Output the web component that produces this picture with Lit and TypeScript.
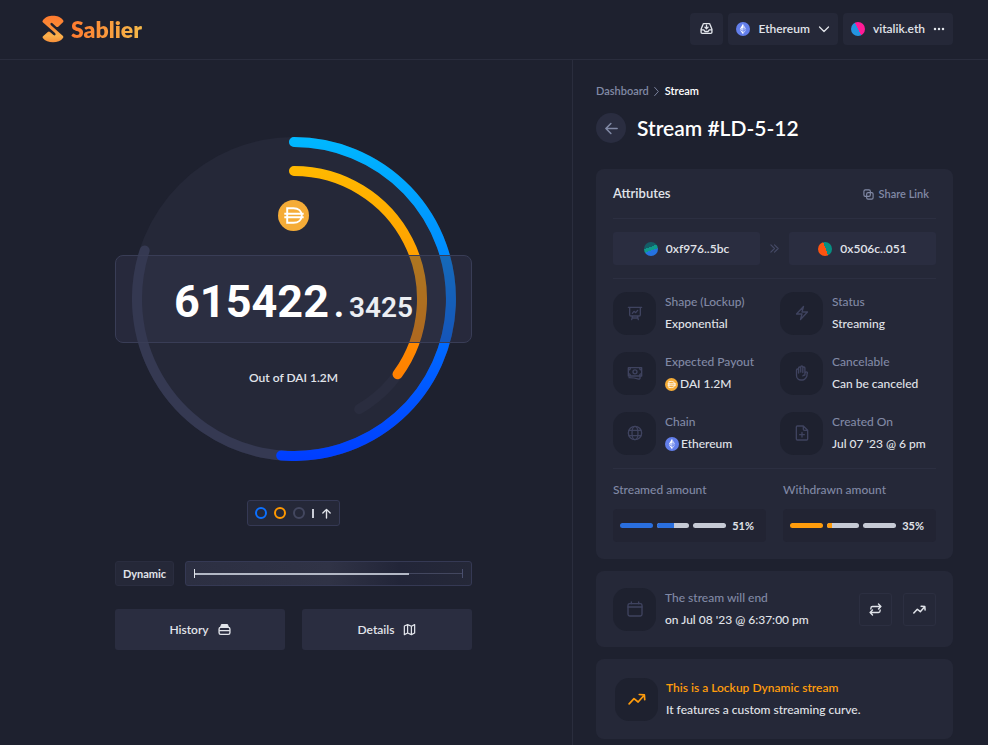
import { LitElement, html, css, svg, TemplateResult, SVGTemplateResult } from "lit";
import { customElement, state } from "lit/decorators.js";

const icon = (body: SVGTemplateResult, size = 16, width = 1.75, box = 24) => html`
  <svg class="icon" width=${size} height=${size} viewBox="0 0 ${box} ${box}" fill="none" stroke="currentColor"
    stroke-width=${width} stroke-linecap="round" stroke-linejoin="round" aria-hidden="true">${body}</svg>`;

const shapes = {
  presentation: svg`<path d="M2 3.500h20M4 3.500v11c0 1.200 1 2 2 2h12c1.200 0 2-.8 2-2v-11M8.500 16.500l-1.500 5.500M15.500 16.500l1.500 5.500M7.500 19.500h9M8 12.500l2.500-3 2.500 2 3-3.500"/>`,
  banknotes: svg`<path d="M2 4h20v12.500H2zM2 7.500a3 3 0 0 0 3-3M22 7.500a3 3 0 0 1-3-3M2 13a3 3 0 0 1 3 3M22 13a3 3 0 0 0-3 3M3 19c5.500 0 10 .7 14.500 2.200 1 .3 2-.3 2-1.300v-3"/><circle cx="12" cy="10.250" r="3"/>`,
  globe: svg`<circle cx="12" cy="12" r="10"/><ellipse cx="12" cy="12" rx="4.500" ry="10"/><path d="M3 8h18M3 16h18"/>`,
  bolt: svg`<path d="M3.750 13.500l10.500-11.250L12 10.500h8.250L9.750 21.750 12 13.500H3.750z"/>`,
  hand: svg`<path d="M10.050 4.575a1.575 1.575 0 1 0-3.150 0v3m3.150-3v-1.500a1.575 1.575 0 0 1 3.150 0v1.500m-3.150 0l.075 5.925m3.075.750V4.575m0 0a1.575 1.575 0 0 1 3.150 0V15M6.900 7.575a1.575 1.575 0 1 0-3.150 0v8.175a6.750 6.750 0 0 0 6.750 6.750h2.018a5.250 5.250 0 0 0 3.712-1.538l1.732-1.732a5.250 5.250 0 0 0 1.538-3.712l.003-2.024a.668.668 0 0 1 .198-.471 1.575 1.575 0 1 0-2.228-2.228 3.818 3.818 0 0 0-1.120 2.687M6.900 7.575V12m6.270 4.318A4.490 4.490 0 0 1 16.350 15"/>`,
  document: svg`<path d="M14 1.500H5A1.500 1.500 0 0 0 3.500 3v18A1.500 1.500 0 0 0 5 22.500h14a1.500 1.500 0 0 0 1.500-1.500V8zM14 1.500v5A1.500 1.500 0 0 0 15.500 8h5M12 11v7M8.500 14.500h7"/>`,
  calendar: svg`<rect x="1.500" y="4" width="21" height="18.500" rx="2.500"/><path d="M1.500 9h21M6.500 1.500V4M17.500 1.500V4"/>`,
  trend: svg`<path d="M1.500 18.500l6.500-7 5.500 4.500 8-9M15 6l6.800.5.500 6.500"/>`,
  swap: svg`<path d="M3.500 11V9.500a3 3 0 0 1 3-3H22M17.500 2L22 6.500 17.500 11"/><path d="M20.500 13V14.500a3 3 0 0 1-3 3H2M6.500 13L2 17.500 6.500 22"/>`,
  inbox: svg`<path d="M2 13.500l3.500-9A2 2 0 0 1 7.500 3h9a2 2 0 0 1 2 1.500l3.500 9V19a2 2 0 0 1-2 2H4a2 2 0 0 1-2-2zM2 14.500h5l2 3h6l2-3h5M12 6v6M9 9.500l3 3 3-3"/>`,
  chevronDown: svg`<path d="M3 8l9 9 9-9"/>`,
  chevronRight: svg`<path d="M8 3l8 9-8 9"/>`,
  chevrons: svg`<path d="M4 4l8 8-8 8M12 4l8 8-8 8"/>`,
  arrowLeft: svg`<path d="M21 12H3M11 4l-8 8 8 8"/>`,
  arrowUp: svg`<path d="M12 22V3M4 11l8-8 8 8"/>`,
  copy: svg`<rect x="2" y="2" width="14" height="14" rx="3"/><rect x="8" y="8" width="14" height="14" rx="3"/>`,
  dots: svg`<g fill="currentColor" stroke="none"><circle cx="4" cy="12" r="2.500"/><circle cx="12" cy="12" r="2.500"/><circle cx="20" cy="12" r="2.500"/></g>`,
  archive: svg`<path d="M5 8l1-3.500A2 2 0 0 1 8 3h8a2 2 0 0 1 2 1.500L19 8z" fill="currentColor"/><rect x="2" y="8" width="20" height="13" rx="3"/><path d="M3 14h18"/>`,
  map: svg`<path d="M2.500 5.500L8.500 3l7 3 6-3v15.500l-6 3-7-3-6 3zM8.500 3v15.500M15.500 6v15.500"/>`,
};

const ethereum = html`
  <svg class="icon" width="14" height="14" viewBox="0 0 32 32" aria-hidden="true">
    <circle cx="16" cy="16" r="16" fill="#627eea"/>
    <path d="M16 4v8.900l7.500 3.400z" fill="#fff" fill-opacity=".6"/><path d="M16 4L8.500 16.300l7.500-3.400z" fill="#fff"/>
    <path d="M16 22v6l7.500-10.400z" fill="#fff" fill-opacity=".6"/><path d="M16 28v-6l-7.500-4.400z" fill="#fff"/>
    <path d="M16 20.600l7.500-4.300-7.500-3.400z" fill="#fff" fill-opacity=".3"/><path d="M8.500 16.300l7.500 4.300v-7.700z" fill="#fff" fill-opacity=".6"/>
  </svg>`;

const dai = (size: number) => html`
  <svg class="icon" width=${size} height=${size} viewBox="0 0 32 32" fill="none" stroke="#fff" stroke-width="2" aria-hidden="true">
    <circle cx="16" cy="16" r="16" fill="#f5ac37" stroke="none"/>
    <path d="M9.500 8.500h6.500c5 0 8.500 3 8.500 7.500s-3.500 7.500-8.500 7.500H9.500zM6.500 14.200h20M6.500 17.800h20"/>
  </svg>`;

/* Arc on the gauge, clockwise from twelve o'clock; share is 0 to 1. */
const arc = (radius: number, share: number) => {
  const a = share * 2 * Math.PI;
  const x = (162 + radius * Math.sin(a)).toFixed(2);
  const y = (162 - radius * Math.cos(a)).toFixed(2);
  return `M162 ${162 - radius}A${radius} ${radius} 0 ${share > 0.5 ? 1 : 0} 1 ${x} ${y}`;
};

interface Fact { icon: SVGTemplateResult; label: string; value: string; mark?: TemplateResult }

@customElement("app-root")
export class AppRoot extends LitElement {
  @state() private streamed = 51;
  @state() private withdrawn = 35;

  private facts: Fact[] = [
    { icon: shapes.presentation, label: "Shape (Lockup)", value: "Exponential" },
    { icon: shapes.bolt, label: "Status", value: "Streaming" },
    { icon: shapes.banknotes, label: "Expected Payout", value: "DAI 1.2M", mark: dai(13) },
    { icon: shapes.hand, label: "Cancelable", value: "Can be canceled" },
    { icon: shapes.globe, label: "Chain", value: "Ethereum", mark: ethereum },
    { icon: shapes.document, label: "Created On", value: "Jul 07 '23 @ 6 pm" },
  ];

  static styles = css`
    :host {
      display: flex; flex-direction: column; min-height: 100vh; box-sizing: border-box;
      background: #1e212f; color: #e1e4ea;
      font: 500 12px/16px Lato, "Liberation Sans", sans-serif;
    }
    *, *::before, *::after { box-sizing: border-box; }
    button { font: inherit; color: inherit; border: 0; padding: 0; margin: 0; cursor: pointer; background: none; }
    a { color: inherit; text-decoration: none; }
    h1, h2, p, dl, dd, dt, ol { margin: 0; padding: 0; }
    .icon { display: block; flex: none; }

    .top { display: flex; align-items: center; justify-content: space-between; height: 60px; padding: 0 35px 2px 42px; border-bottom: 1px solid #2a2d3d; }
    .brand { display: flex; align-items: center; gap: 7px; }
    .wordmark { font-size: 23px; line-height: 28px; font-weight: 800; color: transparent; background: linear-gradient(90deg, #ff7a2f, #f5b94a); background-clip: text; -webkit-background-clip: text; }
    .tools { display: flex; gap: 5px; }
    .tool { display: flex; align-items: center; justify-content: center; gap: 8px; height: 32px; padding: 0 8px; border-radius: 4px; background: #252838; font-weight: 600; }
    .inbox { width: 33px; }
    .avatar { width: 14px; height: 14px; border-radius: 50%; flex: none; }
    .vitalik { background: linear-gradient(65deg, #2494e0 50%, #ff1a97 50%); }
    .sender { background: linear-gradient(160deg, #145c66 38%, #0f9a8c 38% 58%, #2472e0 58%); }
    .recipient { background: linear-gradient(70deg, #fc5310 54%, #078f82 54%); }

    .page { flex: 1; display: grid; grid-template-columns: minmax(0, 11fr) minmax(0, 8fr); }
    .main { padding: 77px 100px 0 115px; display: flex; flex-direction: column; }
    .gauge { display: grid; }
    .dial { grid-area: 1 / 1; justify-self: center; }
    .reading { grid-area: 1 / 1; display: flex; flex-direction: column; align-items: center; padding-top: 63px; z-index: 1; }
    .amount { align-self: stretch; display: flex; justify-content: center; align-items: baseline; height: 88px; margin: 24px 0 27px; padding-top: 16px; border: 1px solid #393d56; border-radius: 8px; background: rgba(52, 56, 80, .4); font-family: Roboto, sans-serif; font-weight: 700; color: #fff; }
    .whole { font-size: 45px; line-height: 60px; }
    .point { font-size: 36px; line-height: 60px; width: 20px; text-align: center; }
    .cents { font-size: 28px; line-height: 60px; color: #eceef3; font-weight: 600; }
    .total { font-weight: 600; }

    .legend { align-self: center; display: flex; align-items: center; gap: 7px; height: 26px; margin-top: 39px; padding: 0 7px; border: 1px solid #353954; border-radius: 3px; background: #252838; }
    .ring { width: 12px; height: 12px; border-radius: 50%; border: 2px solid #43475f; }
    .blue { border-color: #0c70ff; }
    .orange { border-color: #ff9800; }
    .bar { width: 2px; height: 9px; background: #c9ccd6; }

    .timeline { display: flex; gap: 11px; margin-top: 35px; }
    .kind { display: flex; align-items: center; justify-content: center; width: 59px; height: 25px; font-size: 11px; font-weight: 700; border: 1px solid #2a2d3f; border-radius: 3px; background: #252838; }
    .track { flex: 1; display: flex; align-items: center; padding: 0 8px; border: 1px solid #353954; border-radius: 3px; background: linear-gradient(90deg, #2c2f42, #303346 50%, #222538 75%, #252838); }
    .end { width: 1px; height: 9px; background: #4a4f6e; }
    .first { background: #e1e4ea; }
    .line { flex: 1; height: 1px; background: #43475f; }
    .done { height: 2px; background: #b3b8c5; }

    .actions { display: grid; grid-template-columns: 1fr 1fr; gap: 17px; margin-top: 23px; }
    .action { display: flex; align-items: center; justify-content: center; gap: 9px; height: 41px; border-radius: 3px; background: #2a2d40; font-weight: 600; }

    .side { border-left: 1px solid #2a2d3d; padding: 23px 35px 6px 23px; display: flex; flex-direction: column; }
    .crumbs { display: flex; align-items: center; gap: 2px; list-style: none; font-size: 11px; font-weight: 600; color: #8189a5; }
    .crumbs li { display: flex; align-items: center; gap: 3px; }
    .here { color: #fff; }
    .heading { display: flex; align-items: center; gap: 11px; margin: 14px 0 26px; }
    .back { display: flex; align-items: center; justify-content: center; width: 30px; height: 30px; border-radius: 50%; background: #2a2d40; color: #8189a5; }
    h1 { font-size: 21px; line-height: 30px; font-weight: 600; color: #fff; }

    .card { border-radius: 8px; background: #252838; padding: 17px; margin-bottom: 12px; }
    .rule { border-bottom: 1px solid #2c2f41; }
    .cardhead { display: flex; align-items: flex-start; justify-content: space-between; padding: 0 7px 16px 0; }
    h2 { font-size: 13px; line-height: 14px; font-weight: 600; }
    .share { display: flex; align-items: center; gap: 5px; color: #8189a5; font-size: 11px; font-weight: 600; }
    .parties { display: flex; align-items: center; padding: 13px 0; }
    .party { flex: 1; display: flex; align-items: center; justify-content: center; gap: 8px; height: 33px; border-radius: 3px; background: #2a2d40; font-weight: 600; }
    .between { width: 29px; display: flex; justify-content: center; color: #454a66; }
    .facts { display: grid; grid-template-columns: 1fr 1fr; gap: 16px 11px; padding: 12px 0 13px; }
    .fact { display: flex; align-items: center; gap: 9px; }
    .tile { display: flex; align-items: center; justify-content: center; flex: none; width: 43px; height: 43px; border-radius: 14px; background: #1e212f; color: #3f435f; }
    dt, .muted { color: #8189a5; line-height: 22px; white-space: nowrap; }
    dd, .plain { line-height: 22px; display: flex; align-items: center; gap: 2px; white-space: nowrap; }
    .meters { display: grid; grid-template-columns: 1fr 1fr; gap: 17px; padding-top: 10px; }
    .meter { display: flex; align-items: center; gap: 4px; height: 33px; margin-top: 8px; padding: 0 12px 0 7px; border-radius: 4px; background: #222433; font-size: 11px; font-weight: 700; }
    .seg { flex: 1; height: 5px; border-radius: 3px; overflow: hidden; background: #c6cad5; }
    .fill { height: 5px; min-width: 5px; background: #2a6fdf; }
    .warm { background: #ff9c0c; }
    .percent { margin-left: 2px; }

    .notice { display: flex; align-items: center; gap: 9px; padding: 16px 17px; }
    .copytext { flex: 1; }
    .square { display: flex; align-items: center; justify-content: center; width: 33px; height: 33px; margin-left: 2px; border: 1px solid #2c2f41; border-radius: 3px; }
    .dynamic { padding: 18px 19px; margin-bottom: 0; gap: 8px; }
    .accent { color: #ff9c0c; }
    .strong { font-weight: 600; }
  `;

  private meter(label: string, value: number, warm: boolean) {
    const share = (i: number) => Math.max(0, Math.min(100, value * 3 - i * 100));
    return html`<div>
      <div class="muted">${label}</div>
      <div class="meter" role="meter" aria-label=${label} aria-valuenow=${value} aria-valuemin="0" aria-valuemax="100">
        ${[0, 1, 2].map((i) => html`<div class="seg">${share(i) > 0 ? html`<div class="fill ${warm ? "warm" : ""}" style="width:${share(i)}%"></div>` : ""}</div>`)}
        <span class="percent">${value}%</span>
      </div>
    </div>`;
  }

  render() {
    return html`
      <header class="top">
        <a class="brand" href="#" aria-label="Sablier">
          <svg class="icon" width="22" height="28" viewBox="0 0 22 28" aria-hidden="true">
            <defs><linearGradient id="s" x1="0" y1="0" x2="0" y2="1"><stop offset="0" stop-color="#ff7a2f"/><stop offset=".5" stop-color="#f98f38"/><stop offset=".75" stop-color="#fbb24c"/><stop offset="1" stop-color="#f7903a"/></linearGradient></defs>
            <path fill="url(#s)" d="M.5 6C3 2 7 .8 11 .8S19 2 21.300 5.500Q21.800 6.500 21 7.300L16.500 11.500Q15.200 12.500 14 11.500L10.500 8.200Q9.300 7.300 8.600 8.300 8 9.200 9 10.200L21 21Q21.800 22 21 23C19 26 15 27.200 11 27.200S3 26 .8 23Q.2 22 1 21.200L5.800 17Q7 16 8 17L11.500 20Q12.700 20.900 13.400 20 14 19 13 18L.8 7.300Q.2 6.600.5 6z"/>
          </svg>
          <span class="wordmark">Sablier</span>
        </a>
        <div class="tools">
          <button class="tool inbox" aria-label="Inbox">${icon(shapes.inbox, 13, 2.5)}</button>
          <button class="tool">${ethereum}<span>Ethereum</span>${icon(shapes.chevronDown, 12, 2.5)}</button>
          <button class="tool"><span class="avatar vitalik"></span><span>vitalik.eth</span>${icon(shapes.dots, 12)}</button>
        </div>
      </header>
      <div class="page">
        <main class="main">
          <section class="gauge" aria-label="Streamed total">
            <svg class="dial" width="324" height="324" viewBox="0 0 324 324" fill="none" stroke-width="10" stroke-linecap="round" aria-hidden="true">
              <defs>
                <linearGradient id="b" gradientUnits="userSpaceOnUse" x1="0" y1="0" x2="0" y2="324"><stop offset="0" stop-color="#00b8ff"/><stop offset="1" stop-color="#003dff"/></linearGradient>
                <linearGradient id="o" gradientUnits="userSpaceOnUse" x1="0" y1="33" x2="0" y2="240"><stop offset="0" stop-color="#ffb800"/><stop offset="1" stop-color="#ff8000"/></linearGradient>
              </defs>
              <circle cx="162" cy="162" r="162" fill="#252838"/>
              <path d=${arc(157, 0.8)} stroke="#353952"/>
              <path d=${arc(128, 0.415)} stroke="#2a2d3f"/>
              <path d=${arc(157, this.streamed / 100 + 0.003)} stroke="url(#b)"/>
              <path d=${arc(128, this.withdrawn / 100)} stroke="url(#o)"/>
            </svg>
            <div class="reading">
              ${dai(31)}
              <div class="amount"><span class="whole">615422</span><span class="point">.</span><span class="cents">3425</span></div>
              <span class="total">Out of DAI 1.2M</span>
            </div>
          </section>
          <div class="legend">
            <span class="ring blue"></span><span class="ring orange"></span><span class="ring"></span>
            <span class="bar"></span>${icon(shapes.arrowUp, 11, 3)}
          </div>
          <div class="timeline">
            <span class="kind">Dynamic</span>
            <div class="track"><span class="end first"></span><span class="line done" style="flex-grow:4"></span><span class="line"></span><span class="end"></span></div>
          </div>
          <div class="actions">
            <button class="action">History ${icon(shapes.archive, 13, 2.5)}</button>
            <button class="action">Details ${icon(shapes.map, 13, 2.25)}</button>
          </div>
        </main>
        <aside class="side">
          <nav aria-label="Breadcrumb"><ol class="crumbs">
            <li><a href="#">Dashboard</a></li>
            <li>${icon(shapes.chevronRight, 11, 2)}<span class="here" aria-current="page">Stream</span></li>
          </ol></nav>
          <div class="heading">
            <button class="back" aria-label="Back">${icon(shapes.arrowLeft, 15, 2.5)}</button>
            <h1>Stream #LD-5-12</h1>
          </div>
          <section class="card">
            <div class="cardhead rule"><h2>Attributes</h2><button class="share">${icon(shapes.copy, 11, 2.5)}Share Link</button></div>
            <div class="parties rule">
              <button class="party"><span class="avatar sender"></span>0xf976..5bc</button>
              <span class="between">${icon(shapes.chevrons, 11, 2.5)}</span>
              <button class="party"><span class="avatar recipient"></span>0x506c..051</button>
            </div>
            <dl class="facts rule">
              ${this.facts.map((a) => html`<div class="fact">
                <span class="tile">${icon(a.icon, 16, 2)}</span>
                <div><dt>${a.label}</dt><dd>${a.mark}${a.value}</dd></div>
              </div>`)}
            </dl>
            <div class="meters">
              ${this.meter("Streamed amount", this.streamed, false)}
              ${this.meter("Withdrawn amount", this.withdrawn, true)}
            </div>
          </section>
          <section class="card notice">
            <span class="tile">${icon(shapes.calendar, 16, 2)}</span>
            <div class="copytext"><p class="muted">The stream will end</p><p class="plain">on Jul 08 '23 @ 6:37:00 pm</p></div>
            <button class="square" aria-label="Swap view">${icon(shapes.swap, 13, 2.5)}</button>
            <button class="square" aria-label="Show curve">${icon(shapes.trend, 13, 2.75)}</button>
          </section>
          <section class="card notice dynamic">
            <span class="tile accent">${icon(shapes.trend, 18, 2.25)}</span>
            <div class="copytext"><p class="muted accent strong">This is a Lockup Dynamic stream</p><p class="plain">It features a custom streaming curve.</p></div>
          </section>
        </aside>
      </div>`;
  }
}
